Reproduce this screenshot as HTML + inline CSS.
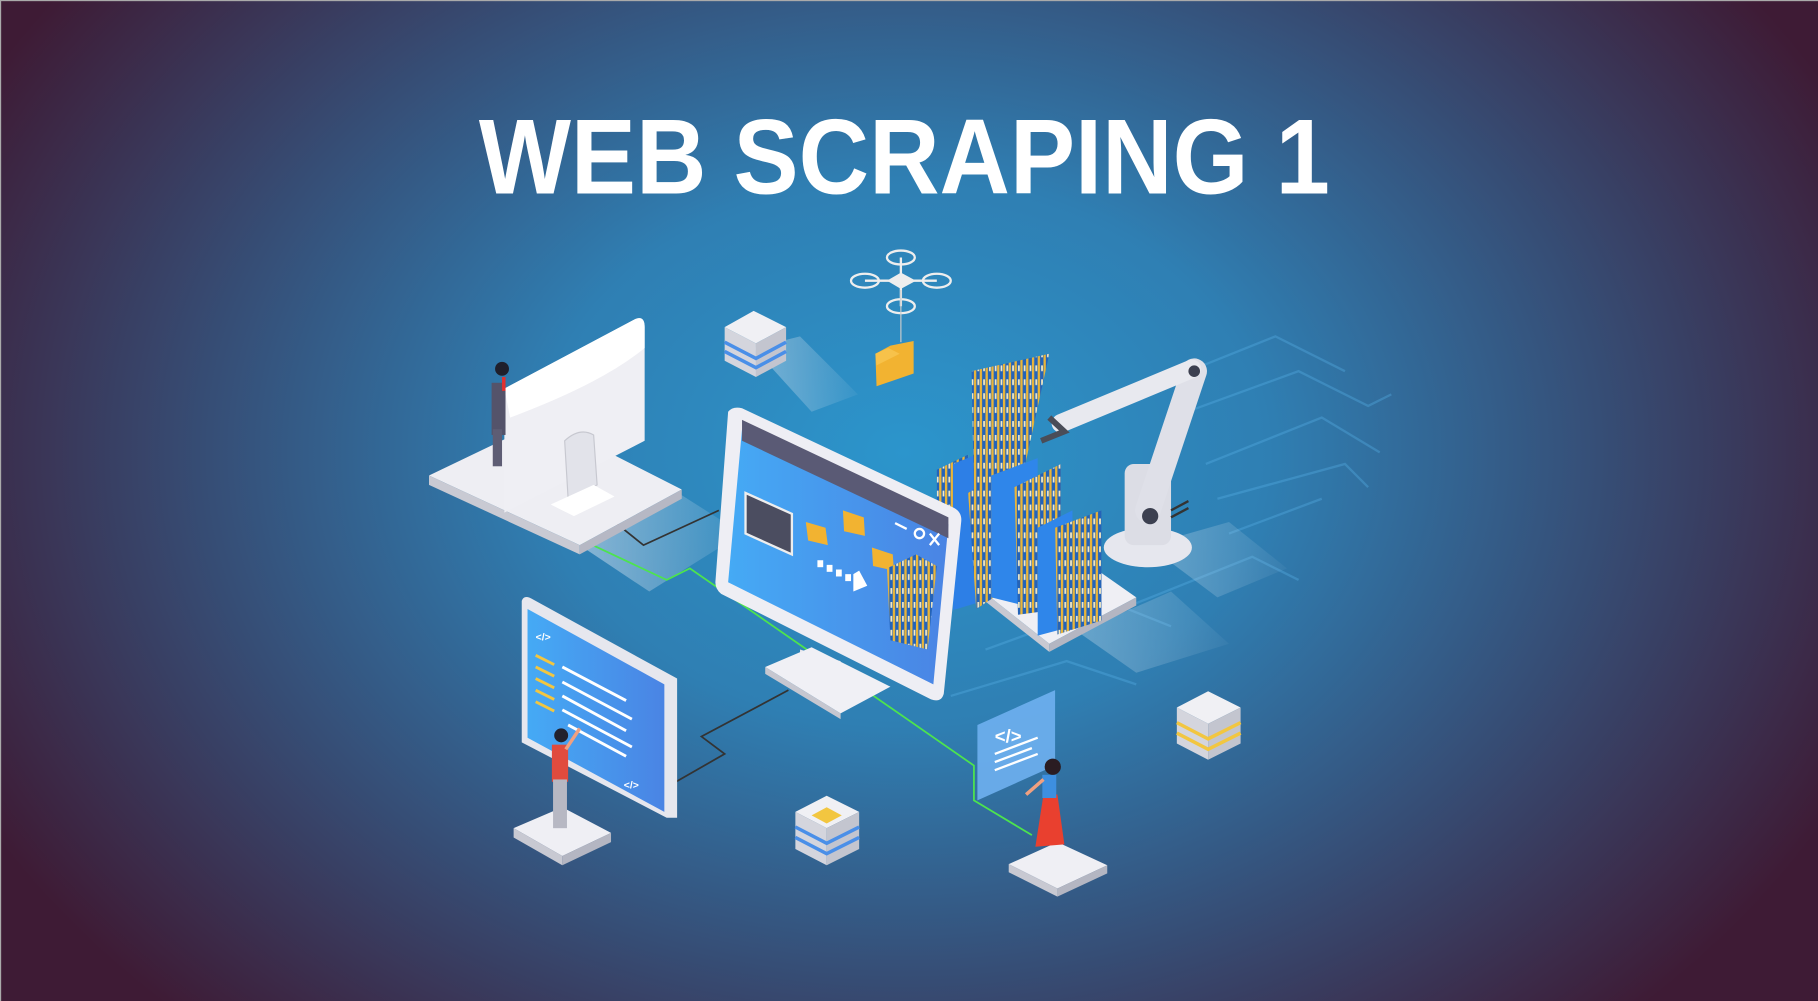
<!DOCTYPE html>
<html><head><meta charset="utf-8"><style>
html,body{margin:0;padding:0;width:1818px;height:1001px;overflow:hidden;background:#33507a}
svg{display:block}
</style></head><body>
<svg width="1818" height="1001" viewBox="0 0 1568 863" preserveAspectRatio="none" xmlns="http://www.w3.org/2000/svg">
<defs>
<radialGradient id="bg" cx="780" cy="390" r="900" gradientUnits="userSpaceOnUse" gradientTransform="translate(780 390) scale(1 0.75) translate(-780 -390)">
<stop offset="0" stop-color="#2c95cc"/>
<stop offset="0.35" stop-color="#2f7fb3"/>
<stop offset="0.62" stop-color="#35557f"/>
<stop offset="1" stop-color="#3e1b35"/>
</radialGradient>
<linearGradient id="scr" x1="0" x2="1" y1="0" y2="0"><stop offset="0" stop-color="#45aaf5"/><stop offset="1" stop-color="#4a84e4"/></linearGradient>
<linearGradient id="glass" x1="0" x2="1"><stop offset="0" stop-color="#cfe0ee" stop-opacity=".8"/><stop offset="1" stop-color="#cfe0ee" stop-opacity=".1"/></linearGradient>
<pattern id="rack" width="5" height="12" patternUnits="userSpaceOnUse"><rect width="5" height="12" fill="#2463b8"/><rect x="0" width="2" height="12" fill="#e9b53a"/><rect x="3" y="3" width="1.5" height="5" fill="#f8ecc4"/></pattern>
</defs>
<rect width="1568" height="863" fill="url(#bg)"/>
<rect x="0" y="0" width="1568" height="1" fill="#aaa"/>
<rect x="0" y="0" width="1" height="863" fill="#aaa"/>

<g stroke="#58b2e8" stroke-opacity=".35" fill="none" stroke-width="2">
<path d="M1000 330 L1100 290 L1160 320"/><path d="M1010 360 L1120 320 L1180 350 L1200 340"/>
<path d="M1040 400 L1140 360 L1190 390"/><path d="M1050 430 L1160 400 L1180 420"/>
<path d="M980 520 L1080 480 L1120 500"/><path d="M850 560 L960 520 L1010 540"/>
<path d="M820 600 L920 570 L980 590"/><path d="M1060 460 L1140 430"/>
</g>

<polygon points="500,470 585,425 640,460 560,510" fill="url(#glass)" opacity=".7"/>
<polygon points="650,300 690,290 740,340 700,355" fill="url(#glass)" opacity=".6"/>
<polygon points="930,545 1010,510 1060,555 980,580" fill="url(#glass)" opacity=".45"/>
<polygon points="990,470 1060,450 1110,490 1050,515" fill="url(#glass)" opacity=".45"/>

<path d="M490 460 L575 500 L595 490 L840 660 L840 690 L890 720" stroke="#4de44d" stroke-width="1.5" fill="none"/>
<path d="M530 450 L555 470 L620 440" stroke="#333" stroke-width="1.5" fill="none"/>
<path d="M680 595 L605 635 L625 650 L555 690" stroke="#333" stroke-width="1.5" fill="none"/>

<polygon points="370,410 470,362 588,422 500,470" fill="#eeeef3"/>
<polygon points="370,410 500,470 500,478 370,418" fill="#c9cad3"/>
<polygon points="500,470 588,422 588,430 500,478" fill="#b6b8c4"/>
<path d="M435 335 L548 275 Q556 272 556 282 L556 380 L435 442 Z" fill="#efeff4"/>
<path d="M435 335 L548 275 Q556 272 556 282 L556 300 Q520 330 440 360 Z" fill="#fff"/>
<path d="M487 380 Q500 368 512 375 L515 418 L490 430 Z" fill="#e2e3ea" stroke="#c7c8d0"/>
<polygon points="475,435 512,418 530,428 495,445" fill="#fff"/>
<rect x="424" y="330" width="12" height="45" fill="#54536a"/>
<rect x="425" y="370" width="8" height="32" fill="#5e5d74"/>
<circle cx="433" cy="318" r="6" fill="#1f1f2b"/>
<rect x="433" y="325" width="3" height="12" fill="#e03030"/>

<polygon points="625,282 650,268 678,282 652,296" fill="#f0f0f4"/>
<polygon points="625,282 652,296 652,325 625,311" fill="#d4d5dd"/>
<polygon points="652,296 678,282 678,311 652,325" fill="#c3c5cf"/>
<path d="M625 295 L652 309 L678 295 M625 303 L652 317 L678 303" stroke="#4a8fe8" stroke-width="3" fill="none"/>

<g stroke="#eee" stroke-width="2" fill="none">
<ellipse cx="746" cy="242" rx="12" ry="6"/><ellipse cx="808" cy="242" rx="12" ry="6"/>
<ellipse cx="777" cy="222" rx="12" ry="6"/><ellipse cx="777" cy="264" rx="12" ry="6"/>
<path d="M746 242 L808 242 M777 222 L777 264"/></g>
<polygon points="765,242 777,235 790,242 777,249" fill="#eee"/>
<line x1="777" y1="250" x2="777" y2="295" stroke="#ccc"/>
<polygon points="755,305 768,298 788,294 788,322 756,333" fill="#f2b331"/>
<polygon points="755,305 766,300 776,305 756,315" fill="#f7c24a"/>

<polygon points="810,480 880,445 980,515 905,555" fill="#efeff4"/>
<polygon points="810,480 905,555 905,562 810,487" fill="#c8c9d2"/>
<polygon points="905,555 980,515 980,522 905,562" fill="#b4b6c2"/>
<polygon points="808,405 835,392 835,490 808,500" fill="url(#rack)"/>
<polygon points="822,400 842,392 842,520 822,526" fill="#2d7fe6"/>
<polygon points="835,425 865,405 880,500 842,525" fill="url(#rack)"/>
<polygon points="838,320 905,305 880,420 840,425" fill="url(#rack)"/>
<polygon points="855,410 895,395 895,525 855,515" fill="#2f86ea"/>
<polygon points="875,420 915,400 915,525 878,530" fill="url(#rack)"/>
<polygon points="895,455 925,440 925,540 895,548" fill="#2f86ea"/>
<polygon points="910,455 950,440 950,535 912,547" fill="url(#rack)"/>
<ellipse cx="990" cy="472" rx="38" ry="17" fill="#e6e7ee"/>
<rect x="970" y="400" width="40" height="70" rx="8" fill="#dcdde5"/>
<path d="M990 440 L1030 320" stroke="#dfe0e8" stroke-width="22" stroke-linecap="round"/>
<path d="M1028 318 L915 365" stroke="#e8e9ef" stroke-width="16" stroke-linecap="round"/>
<circle cx="992" cy="445" r="7" fill="#3c4050"/>
<circle cx="1030" cy="320" r="5" fill="#3c4050"/>
<path d="M1010 440 L1025 432 M1010 446 L1025 438" stroke="#333" stroke-width="2"/>
<path d="M905 360 L918 372 L898 380" stroke="#4a4d58" stroke-width="5" fill="none"/>

<polygon points="690,560 725,570 725,600 690,585" fill="#e4e5ec"/>
<polygon points="660,575 700,558 768,592 725,615" fill="#f0f0f5"/>
<polygon points="660,575 725,615 725,620 660,581" fill="#c6c7d0"/>
<path d="M628 355 Q632 350 640 352 L823 438 Q830 442 829 450 L814 598 Q812 606 803 603 L622 512 Q617 508 617 502 Z" fill="#eeeef4"/>
<polygon points="640,370 818,452 805,590 628,502" fill="url(#scr)"/>
<polygon points="640,362 818,446 818,464 640,380" fill="#5a5a75"/>
<g stroke="#fff" stroke-width="2" fill="none"><path d="M772 451 L782 456"/><circle cx="793" cy="460" r="4"/><path d="M802 460 L810 470 M810 460 L802 470"/></g>
<polygon points="643,425 683,443 683,478 643,460" fill="#4b4d60" stroke="#eee" stroke-width="2"/>
<g fill="#f2b331"><polygon points="695,450 712,455 714,470 697,466"/><polygon points="727,440 745,446 746,462 728,458"/><polygon points="752,472 770,478 771,492 753,488"/></g>
<g fill="#fff"><rect x="705" y="483" width="5" height="6"/><rect x="713" y="487" width="5" height="6"/><rect x="721" y="491" width="5" height="6"/><rect x="729" y="495" width="5" height="6"/><polygon points="736,495 741,492 748,505 736,510"/></g>
<polygon points="765,490 790,478 808,488 800,560 768,552" fill="url(#rack)"/>

<path d="M450 518 Q452 512 460 517 L584 585 L584 705 L575 705 L450 640 Z" fill="#e6e7ee"/>
<polygon points="455,525 573,590 573,700 455,636" fill="url(#scr)"/>
<g stroke="#f2c640" stroke-width="2.5"><path d="M462 565 L478 573 M462 575 L478 583 M462 585 L478 593 M462 595 L478 603 M462 605 L478 613"/></g>
<g stroke="#fff" stroke-width="2.5"><path d="M485 575 L540 604 M485 588 L545 620 M485 600 L540 630 M485 612 L545 644 M490 625 L540 652"/></g>
<text x="462" y="552" fill="#fff" font-family="Liberation Sans, sans-serif" font-size="9" font-weight="bold">&lt;/&gt;</text>
<text x="538" y="680" fill="#fff" font-family="Liberation Sans, sans-serif" font-size="9" font-weight="bold">&lt;/&gt;</text>
<polygon points="443,714 485,696 527,718 485,738" fill="#efeff4"/>
<polygon points="443,714 485,738 485,746 443,722" fill="#c8c9d2"/>
<polygon points="485,738 527,718 527,726 485,746" fill="#b4b6c2"/>
<rect x="476" y="642" width="14" height="32" fill="#e04b3e"/>
<rect x="477" y="672" width="12" height="42" fill="#b7b8c3"/>
<circle cx="484" cy="634" r="6" fill="#22222e"/>
<path d="M488 646 L500 628" stroke="#f0a080" stroke-width="3"/>

<polygon points="843,625 910,595 910,660 843,690" fill="#6fb0f0" opacity=".9"/>
<text x="858" y="640" fill="#fff" font-family="Liberation Sans, sans-serif" font-size="16" font-weight="bold">&lt;/&gt;</text>
<g stroke="#fff" stroke-width="2"><path d="M858 650 L895 636 M858 657 L890 645 M858 664 L895 650"/></g>
<polygon points="870,745 912,726 955,746 912,766" fill="#efeff4"/>
<polygon points="870,745 912,766 912,773 870,752" fill="#c8c9d2"/>
<polygon points="912,766 955,746 955,753 912,773" fill="#b4b6c2"/>
<polygon points="900,685 912,685 918,728 893,730" fill="#e9402f"/>
<rect x="899" y="668" width="12" height="20" fill="#3d8fe0"/>
<circle cx="908" cy="661" r="7" fill="#2a1c22"/>
<path d="M900 672 L885 685" stroke="#f0a080" stroke-width="3"/>

<polygon points="1015,610 1042,596 1070,610 1042,624" fill="#f0f0f4"/>
<polygon points="1015,610 1042,624 1042,655 1015,641" fill="#d4d5dd"/>
<polygon points="1042,624 1070,610 1070,641 1042,655" fill="#c3c5cf"/>
<path d="M1015 623 L1042 637 L1070 623 M1015 632 L1042 646 L1070 632" stroke="#f2c640" stroke-width="3" fill="none"/>
<polygon points="686,700 713,686 741,700 713,714" fill="#f0f0f4"/>
<polygon points="700,703 713,696 726,703 713,710" fill="#f2c640"/>
<polygon points="686,700 713,714 713,746 686,732" fill="#d4d5dd"/>
<polygon points="713,714 741,700 741,732 713,746" fill="#c3c5cf"/>
<path d="M686 713 L713 727 L741 713 M686 722 L713 736 L741 722" stroke="#4a8fe8" stroke-width="3" fill="none"/>

<text x="780" y="167" text-anchor="middle" fill="#fff" font-family="Liberation Sans, sans-serif" font-weight="bold" font-size="92" textLength="734" lengthAdjust="spacingAndGlyphs">WEB SCRAPING 1</text>
</svg>
</body></html>
